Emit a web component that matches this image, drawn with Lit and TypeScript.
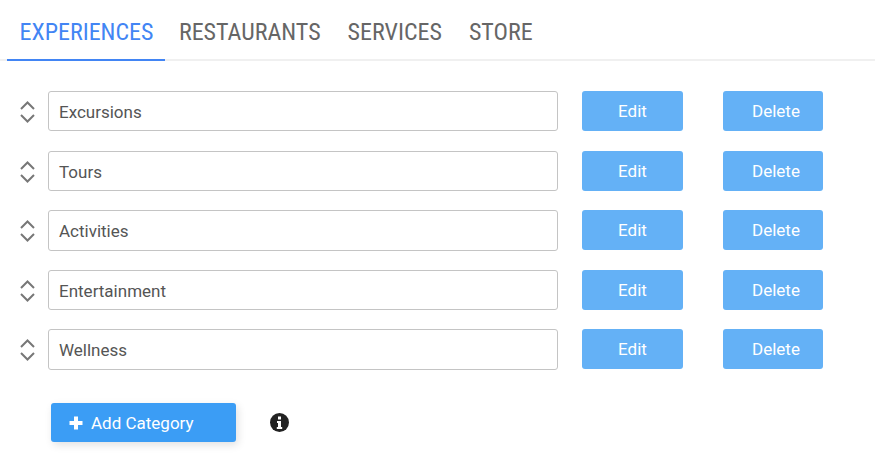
import { LitElement, html, css } from 'lit';
import { customElement } from 'lit/decorators.js';

const TABS = ['EXPERIENCES', 'RESTAURANTS', 'SERVICES', 'STORE'];
const CATEGORIES = ['Excursions', 'Tours', 'Activities', 'Entertainment', 'Wellness'];

@customElement('app-root')
export class AppRoot extends LitElement {
  static styles = css`
    :host {
      display: block;
      width: 875px;
      height: 459px;
      background: #fff;
      font-family: Roboto, sans-serif;
      overflow: hidden;
    }

    .tabs {
      display: flex;
      height: 61px;
      padding-left: 7px;
      box-sizing: border-box;
      border-bottom: 2px solid #f0f0f0;
    }

    .tab {
      height: 61px;
      box-sizing: border-box;
      padding: 17px 13.5px 0;
      font-size: 24px;
      line-height: 30px;
      font-stretch: 75%;
      color: #666;
      white-space: nowrap;
    }

    .tab.active {
      color: #4285f4;
      border-bottom: 2px solid #4285f4;
      padding: 17px 12px 0 12.5px;
    }

    .rows {
      display: flex;
      flex-direction: column;
      gap: 19.2px;
      padding: 30px 0 0 19px;
    }

    .row {
      display: flex;
      align-items: flex-start;
      height: 40.4px;
    }

    .sort {
      width: 17px;
      height: 24px;
      margin: 9px 12px 0 0;
      flex: none;
    }

    .field {
      width: 510px;
      height: 40.4px;
      box-sizing: border-box;
      border: 1px solid #c4c4c4;
      border-radius: 3px;
      padding: 1px 10px 0;
      font-size: 17px;
      line-height: 38px;
      color: #555;
      margin-right: 24px;
    }

    .btn {
      height: 40px;
      border-radius: 3px;
      background: #64b1f6;
      color: #fff;
      font-size: 17px;
      line-height: 41px;
      text-align: center;
    }

    .edit {
      width: 101px;
      margin-right: 40px;
    }

    .delete {
      width: 100px;
      padding-left: 6px;
      box-sizing: border-box;
    }

    .footer {
      display: flex;
      align-items: center;
      padding: 33px 0 0 51px;
    }

    .add {
      display: flex;
      align-items: center;
      width: 185px;
      height: 39px;
      box-sizing: border-box;
      padding: 1px 0 0 18px;
      border-radius: 3px;
      background: #3b9df5;
      color: #fff;
      font-size: 17px;
      box-shadow: 2px 3px 8px rgba(0, 0, 0, 0.12);
    }

    .add svg {
      margin-right: 8px;
    }

    .info {
      margin-left: 34px;
    }
  `;

  render() {
    return html`
      <div class="tabs">
        ${TABS.map((tab, i) => html`<div class="tab ${i === 0 ? 'active' : ''}">${tab}</div>`)}
      </div>
      <div class="rows">
        ${CATEGORIES.map(
          name => html`
            <div class="row">
              <svg class="sort" viewBox="0 0 17 24" fill="none" stroke="#777" stroke-width="2">
                <path d="M2 9 8.500 2.500 15 9" />
                <path d="M2 15 8.500 21.500 15 15" />
              </svg>
              <div class="field">${name}</div>
              <div class="btn edit">Edit</div>
              <div class="btn delete">Delete</div>
            </div>
          `
        )}
      </div>
      <div class="footer">
        <div class="add">
          <svg width="14" height="14" viewBox="0 0 14 14" fill="#fff">
            <path d="M5 0.5h4v4.500h4.500v4H9v4.500H5V9H0.500V5H5z" />
          </svg>
          Add Category
        </div>
        <svg class="info" width="19" height="19" viewBox="0 0 19 19">
          <circle cx="9.500" cy="9.500" r="9.500" fill="#222" />
          <path fill="#fff" d="M8 3.500h3v3H8zM7 8h4v6h1.200v2H6.800v-2H8v-4H7z" />
        </svg>
      </div>
    `;
  }
}

declare global {
  interface HTMLElementTagNameMap {
    'app-root': AppRoot;
  }
}
